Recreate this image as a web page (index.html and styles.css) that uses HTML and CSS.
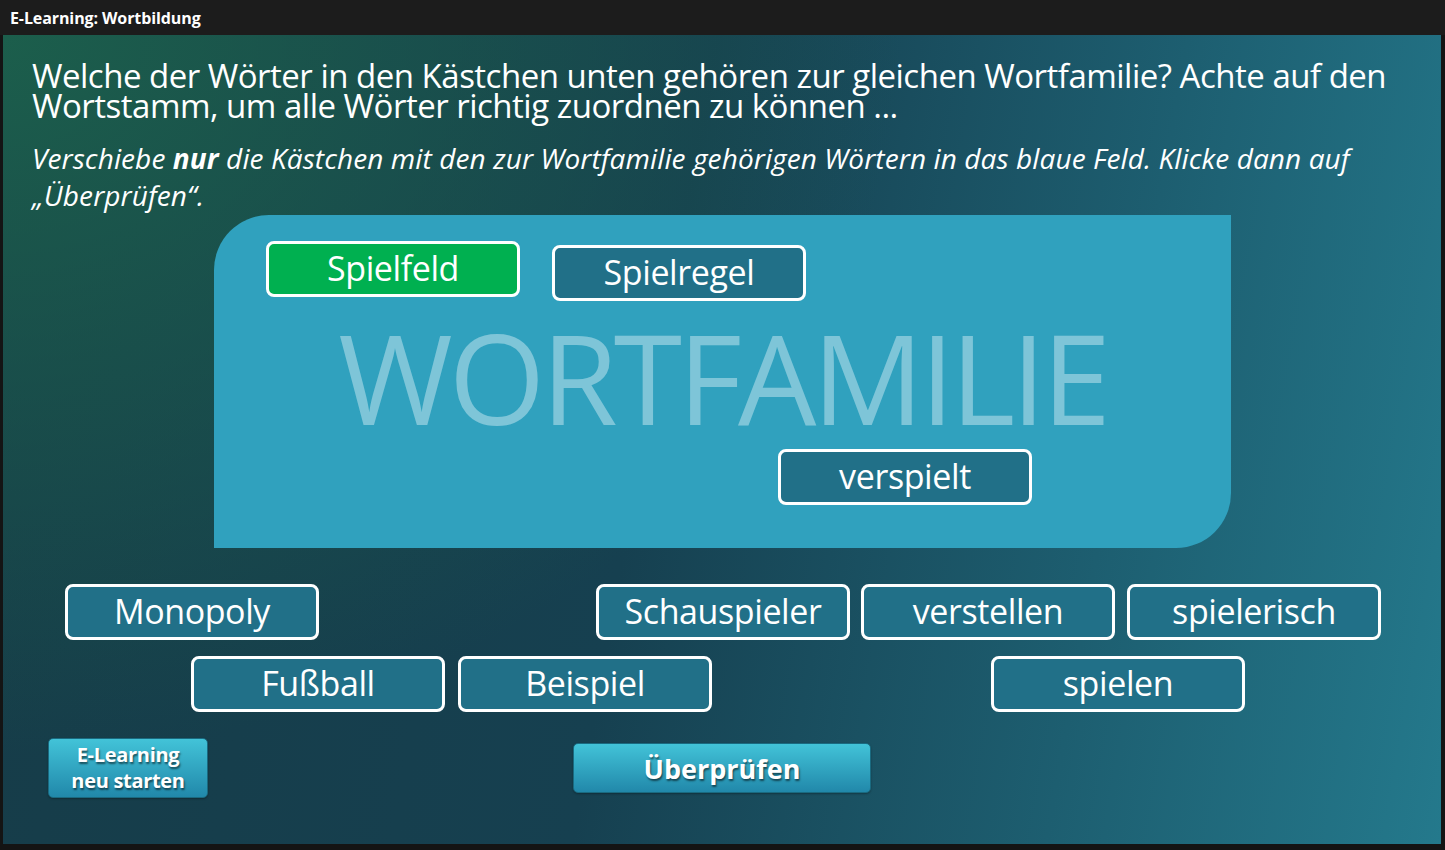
FILE: index.html
```html
<!DOCTYPE html>
<html lang="de">
<head>
<meta charset="utf-8">
<title>E-Learning: Wortbildung</title>
<link rel="stylesheet" href="styles.css">
</head>
<body>
<header class="titlebar">E-Learning: Wortbildung</header>
<main class="stage">
  <section class="instructions">
    <p class="question">Welche der Wörter in den Kästchen unten gehören zur gleichen Wortfamilie? Achte auf den Wortstamm, um alle Wörter richtig zuordnen zu können ...</p>
    <p class="hint">Verschiebe <b>nur</b> die Kästchen mit den zur Wortfamilie gehörigen Wörtern in das blaue Feld. Klicke dann auf „Überprüfen“.</p>
  </section>
  <div class="field">
    <span class="field-label">WORTFAMILIE</span>
  </div>
  <div class="tile tile-correct" style="left:263px; top:206px">Spielfeld</div>
  <div class="tile" style="left:549px; top:210px">Spielregel</div>
  <div class="tile" style="left:775px; top:414px">verspielt</div>
  <div class="tile" style="left:62px; top:549px">Monopoly</div>
  <div class="tile" style="left:593px; top:549px">Schauspieler</div>
  <div class="tile" style="left:858px; top:549px">verstellen</div>
  <div class="tile" style="left:1124px; top:549px">spielerisch</div>
  <div class="tile" style="left:188px; top:621px">Fußball</div>
  <div class="tile" style="left:455px; top:621px">Beispiel</div>
  <div class="tile" style="left:988px; top:621px">spielen</div>
  <footer class="actions">
    <button class="btn btn-restart">E-Learning<br>neu starten</button>
    <button class="btn btn-check">Überprüfen</button>
  </footer>
</main>
</body>
</html>
```

FILE: styles.css
```css
* { box-sizing: border-box; }
html, body { margin: 0; padding: 0; }
body {
  width: 1445px;
  height: 850px;
  background: #141414;
  font-family: "Open Sans", "Noto Sans", sans-serif;
  overflow: hidden;
}
.titlebar {
  height: 35px;
  background: #1c1c1c;
  color: #fff;
  font-weight: 700;
  font-size: 16px;
  line-height: 36px;
  padding-left: 10px;
  letter-spacing: -0.1px;
}
.stage {
  position: relative;
  margin-left: 3px;
  width: 1438px;
  height: 809px;
  background:
    radial-gradient(ellipse 900px 720px at 0 0, rgba(28, 96, 76, 0.95) 0%, rgba(28, 96, 76, 0) 100%),
    linear-gradient(100deg, #163c48 0%, #164050 45%, #1d5e70 75%, #24798c 100%);
  color: #fff;
}
.instructions {
  padding: 26px 0 0 29px;
  height: 180px;
}
.question {
  margin: 0;
  font-size: 33px;
  line-height: 30px;
  letter-spacing: -0.5px;
  width: 1400px;
}
.hint {
  margin: 19px 0 0 0;
  font-size: 28px;
  line-height: 37px;
  font-style: italic;
  letter-spacing: 0.1px;
  width: 1340px;
}
.hint b { font-weight: 700; }
.field {
  margin-left: 211px;
  width: 1017px;
  height: 333px;
  background: #30a1be;
  border-radius: 55px 0 55px 0;
  display: flex;
  justify-content: center;
  align-items: center;
  padding-bottom: 10px;
}
.field-label {
  color: #7ec5d8;
  font-size: 124px;
  letter-spacing: -4px;
  line-height: 0.8;
}
.tile {
  position: absolute;
  width: 254px;
  height: 56px;
  border: 3px solid #fff;
  border-radius: 8px;
  background: #217088;
  color: #fff;
  font-size: 34px;
  letter-spacing: -0.4px;
  display: flex;
  align-items: center;
  justify-content: center;
  padding-bottom: 2px;
}
.tile-correct { background: #00b050; }
.actions {
  display: flex;
  align-items: flex-start;
  padding-left: 45px;
  margin-top: 190px;
}
.btn {
  border: 1px solid #1a6a80;
  border-radius: 5px;
  color: #fff;
  font-family: "Open Sans", "Noto Sans", sans-serif;
  font-weight: 700;
  text-shadow: 1px 2px 2px rgba(0,0,0,0.55);
  background: linear-gradient(#42c3d8, #2188aa);
  box-shadow: 0 1px 2px rgba(0,0,0,0.3);
  padding: 0;
}
.btn-restart {
  width: 160px;
  height: 60px;
  font-size: 20px;
  line-height: 26px;
  letter-spacing: -0.3px;
}
.btn-check {
  width: 298px;
  height: 50px;
  margin-left: 365px;
  margin-top: 5px;
  font-size: 27px;
  letter-spacing: 0;
}
```
